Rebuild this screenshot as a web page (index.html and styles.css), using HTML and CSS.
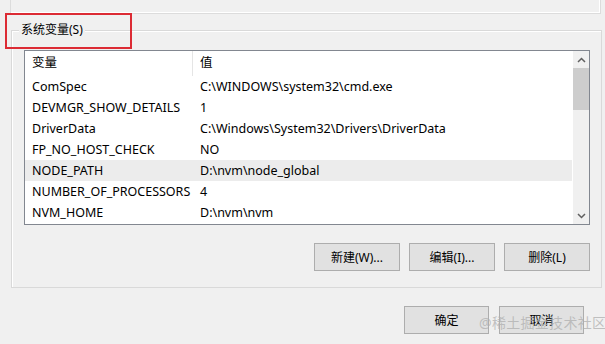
FILE: index.html
```html
<!DOCTYPE html>
<html>
<head>
<meta charset="utf-8">
<link rel="stylesheet" href="styles.css">
</head>
<body>
<div class="page">
  <div class="top-group"></div>
  <div class="group">
    <div class="legend">系统变量(S)</div>
    <div class="list">
      <div class="list-main">
        <div class="row header"><div class="c1">变量</div><div class="c2">值</div></div>
        <div class="row"><div class="c1">ComSpec</div><div class="c2">C:\WINDOWS\system32\cmd.exe</div></div>
        <div class="row"><div class="c1">DEVMGR_SHOW_DETAILS</div><div class="c2">1</div></div>
        <div class="row"><div class="c1">DriverData</div><div class="c2">C:\Windows\System32\Drivers\DriverData</div></div>
        <div class="row"><div class="c1">FP_NO_HOST_CHECK</div><div class="c2">NO</div></div>
        <div class="row sel"><div class="c1">NODE_PATH</div><div class="c2">D:\nvm\node_global</div></div>
        <div class="row"><div class="c1">NUMBER_OF_PROCESSORS</div><div class="c2">4</div></div>
        <div class="row"><div class="c1">NVM_HOME</div><div class="c2">D:\nvm\nvm</div></div>
      </div>
      <div class="scrollbar">
        <div class="arrow"><svg width="9" height="6" viewBox="0 0 9 6"><path d="M1 5 L4.5 1.5 L8 5" fill="none" stroke="#606060" stroke-width="1.5"/></svg></div>
        <div class="thumb"></div>
        <div class="track"></div>
        <div class="arrow"><svg width="9" height="6" viewBox="0 0 9 6"><path d="M1 1 L4.5 4.5 L8 1" fill="none" stroke="#606060" stroke-width="1.5"/></svg></div>
      </div>
    </div>
    <div class="btn-row">
      <button class="btn">新建(W)...</button>
      <button class="btn">编辑(I)...</button>
      <button class="btn">删除(L)</button>
    </div>
  </div>
  <div class="dialog-row">
    <button class="btn">确定</button>
    <button class="btn">取消</button>
  </div>
  <div class="highlight"></div>
  <div class="watermark">@稀土掘金技术社区</div>
</div>
</body>
</html>
```
FILE: styles.css
```css
* { box-sizing: border-box; }
html, body { margin: 0; padding: 0; }
body {
  background: #f0f0f0;
  font-family: "Noto Sans", "Noto Sans CJK SC", sans-serif;
  font-size: 12px;
  color: #000;
}
.page {
  position: relative;
  width: 605px;
  height: 344px;
  overflow: hidden;
}
.top-group {
  margin-left: 10px;
  width: 591px;
  height: 14px;
  border: 1px solid #dcdcdc;
  border-top: none;
  box-shadow: inset -1px -1px 0 #fff;
}
.group {
  position: relative;
  margin: 16px 3px 0 11px;
  height: 258px;
  border: 1px solid #d9d9d9;
  box-shadow: inset 1px 1px 0 #fff;
}
.legend {
  position: absolute;
  left: 7px;
  top: -10px;
  padding: 0 2px;
  background: #f0f0f0;
  line-height: 18px;
}
.list {
  display: flex;
  margin: 19px 11px 0 12px;
  height: 175px;
  border: 1px solid #828790;
  background: #fff;
  font-size: 12.5px;
}
.list-main {
  flex: 1;
  display: flex;
  flex-direction: column;
}
.row {
  display: flex;
  height: 21px;
  line-height: 21px;
  white-space: nowrap;
}
.row.header {
  height: 25px;
  line-height: 23px;
}
.row.header .c1 {
  border-right: 1px solid #e5e5e5;
}
.row.sel { background: #ececec; }
.c1 {
  width: 168px;
  padding-left: 7px;
  overflow: hidden;
}
.c2 {
  flex: 1;
  padding-left: 7px;
  overflow: hidden;
}
.scrollbar {
  width: 17px;
  display: flex;
  flex-direction: column;
  background: #f0f0f0;
  border-left: 1px solid #fff;
}
.arrow {
  height: 17px;
  display: flex;
  align-items: center;
  justify-content: center;
}
.thumb {
  height: 42px;
  background: #cdcdcd;
}
.track { flex: 1; }
.btn-row {
  display: flex;
  justify-content: flex-end;
  gap: 9px;
  margin: 18px 11px 0 0;
}
.btn {
  width: 86px;
  height: 28px;
  background: #e1e1e1;
  border: 1px solid #adadad;
  font-family: inherit;
  font-size: 12px;
  color: #000;
  padding: 0;
}
.dialog-row {
  display: flex;
  justify-content: flex-end;
  gap: 10px;
  margin: 18px 21px 0 0;
}
.dialog-row .btn {
  width: 85px;
  height: 28px;
}
.highlight {
  position: absolute;
  left: 5px;
  top: 13px;
  width: 127px;
  height: 36px;
  border: 2px solid #dc2b34;
}
.watermark {
  position: absolute;
  left: 479px;
  top: 312px;
  font-size: 14px;
  white-space: nowrap;
  color: rgba(175,175,175,0.75);
  letter-spacing: 0.3px;
}
```
